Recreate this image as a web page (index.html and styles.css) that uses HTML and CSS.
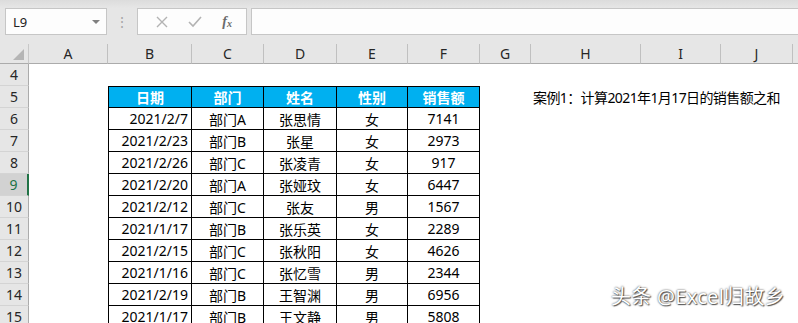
FILE: index.html
```html
<!DOCTYPE html>
<html lang="zh-CN">
<head>
    <meta charset="UTF-8">
    <title>SUMIF 案例</title>
    <link rel="stylesheet" href="styles.css">
</head>
<body>
    <div class="topstrip"></div>
    <div class="formula-bar">
        <div class="name-box">
            <span>L9</span>
            <span class="drop"></span>
        </div>
        <div class="grip">⋮</div>
        <div class="fx-box">
            <span class="ico">
                <svg width="12" height="12" viewBox="0 0 12 12"><path d="M1 1 L11 11 M11 1 L1 11" stroke="#b3b3b3" stroke-width="1.4" fill="none"/></svg>
            </span>
            <span class="ico">
                <svg width="14" height="12" viewBox="0 0 14 12"><path d="M1 6 L5 10 L13 1" stroke="#b3b3b3" stroke-width="1.6" fill="none"/></svg>
            </span>
            <span class="fx">f<sub>x</sub></span>
        </div>
        <div class="input"></div>
    </div>

    <div class="sheet" id="sheet">
        <div class="corner"><span class="tri"></span></div>
        <div class="ch">A</div>
        <div class="ch">B</div>
        <div class="ch">C</div>
        <div class="ch">D</div>
        <div class="ch">E</div>
        <div class="ch">F</div>
        <div class="ch">G</div>
        <div class="ch">H</div>
        <div class="ch">I</div>
        <div class="ch">J</div>
        <div class="ch last"></div>
    </div>

    <div class="watermark">头条 @Excel归故乡</div>

    <script>
        const head = ['日期', '部门', '姓名', '性别', '销售额'];
        const rows = [
            ['2021/2/7', '部门A', '张思情', '女', '7141'],
            ['2021/2/23', '部门B', '张星', '女', '2973'],
            ['2021/2/26', '部门C', '张凌青', '女', '917'],
            ['2021/2/20', '部门A', '张娅玟', '女', '6447'],
            ['2021/2/12', '部门C', '张友', '男', '1567'],
            ['2021/1/17', '部门B', '张乐英', '女', '2289'],
            ['2021/2/15', '部门C', '张秋阳', '女', '4626'],
            ['2021/1/16', '部门C', '张忆雪', '男', '2344'],
            ['2021/2/19', '部门B', '王智渊', '男', '6956'],
            ['2021/1/17', '部门B', '王文静', '男', '5808']
        ];
        const activeRow = 9;

        const sheet = document.getElementById('sheet');

        function cell(cls, text) {
            const d = document.createElement('div');
            d.className = cls;
            if (text) d.textContent = text;
            sheet.appendChild(d);
        }

        function addRow(num, values, isHead) {
            cell(num === activeRow ? 'rh active' : 'rh', String(num));
            cell('c');
            if (values) {
                values.forEach((v, i) => {
                    let cls = 'c t';
                    if (i === 0) cls += ' first';
                    if (isHead) cls += ' th';
                    else if (i === 0) cls += ' right';
                    cell(cls, v);
                });
            } else {
                for (let i = 0; i < 5; i++) cell('c');
            }
            cell('c');
            cell('c note', isHead ? '案例1：计算2021年1月17日的销售额之和' : '');
            cell('c');
            cell('c');
            cell('c');
        }

        addRow(4, null, false);
        addRow(5, head, true);
        rows.forEach((r, i) => addRow(i + 6, r, false));
    </script>
</body>
</html>
```

FILE: styles.css
```css
* {
    margin: 0;
    padding: 0;
    box-sizing: border-box;
}

body {
    width: 798px;
    height: 323px;
    overflow: hidden;
    background: #e6e6e6;
    font-family: "Noto Sans", "Noto Sans CJK SC", sans-serif;
    font-size: 14px;
    color: #000;
    position: relative;
}

.topstrip {
    height: 8px;
    background: linear-gradient(#dcdcdc, #e6e6e6);
}

.formula-bar {
    display: flex;
    align-items: stretch;
    height: 27px;
    padding-left: 5px;
}

.name-box {
    width: 102px;
    background: #fdfdfd;
    border: 1px solid #c6c6c6;
    display: flex;
    align-items: center;
    justify-content: space-between;
    padding: 0 6px 0 7px;
    font-size: 13px;
    color: #222;
}

.drop {
    width: 0;
    height: 0;
    border-left: 4px solid transparent;
    border-right: 4px solid transparent;
    border-top: 4px solid #808080;
}

.grip {
    width: 30px;
    display: flex;
    align-items: center;
    justify-content: center;
    color: #a6a6a6;
    font-size: 14px;
}

.fx-box {
    width: 110px;
    background: #fdfdfd;
    border: 1px solid #c6c6c6;
    display: flex;
    align-items: center;
    justify-content: space-around;
    padding: 0 4px 0 8px;
}

.ico {
    display: flex;
    align-items: center;
}

.fx {
    font-family: "Liberation Serif", serif;
    font-style: italic;
    font-weight: bold;
    font-size: 14px;
    color: #6b6b6b;
    line-height: 1;
}

.fx sub {
    font-size: 10px;
    vertical-align: -1px;
}

.input {
    flex: 1;
    margin-left: 4px;
    background: #fdfdfd;
    border-top: 1px solid #c6c6c6;
    border-bottom: 1px solid #c6c6c6;
    border-left: 1px solid #c6c6c6;
}

.sheet {
    margin-top: 9px;
    display: grid;
    grid-template-columns: 29px 79px 84px 72px 73px 71px 72px 51px 110px 80px 72px 1fr;
    grid-template-rows: 20px;
    grid-auto-rows: 22px;
    background: #fff;
}

.corner,
.ch {
    background: #e6e6e6;
    border-bottom: 1px solid #ababab;
}

.corner {
    position: relative;
    border-right: 1px solid #c8c8c8;
}

.tri {
    position: absolute;
    right: 4px;
    bottom: 3px;
    width: 0;
    height: 0;
    border-left: 11px solid transparent;
    border-bottom: 11px solid #b5b5b5;
}

.ch {
    border-right: 1px solid #c0c0c0;
    display: flex;
    align-items: flex-end;
    justify-content: center;
    font-size: 14px;
    line-height: 19px;
    color: #262626;
}

.ch.last {
    border-right: none;
}

.rh {
    background: #e6e6e6;
    border-right: 1px solid #ababab;
    border-bottom: 1px solid #d4d4d4;
    display: flex;
    align-items: center;
    justify-content: center;
    font-size: 14px;
    color: #262626;
}

.rh.active {
    background: #d2d2d2;
    border-right: 2px solid #217346;
    color: #217346;
}

.c {
    display: flex;
    align-items: center;
    justify-content: center;
    white-space: nowrap;
}

.t {
    border-right: 1px solid #000;
    border-bottom: 1px solid #000;
}

.t.first {
    border-left: 1px solid #000;
}

.th {
    background: #00b0f0;
    color: #fff;
    font-weight: bold;
    border-top: 1px solid #000;
}

.right {
    justify-content: flex-end;
    padding-right: 3px;
}

.note {
    justify-content: flex-start;
    padding-left: 2px;
    letter-spacing: -0.6px;
}

.watermark {
    position: absolute;
    right: 13px;
    bottom: 13px;
    color: #fff;
    font-size: 20px;
    letter-spacing: 0.3px;
    text-shadow: 0 0 2px rgba(0,0,0,0.8), 1px 1px 1px rgba(0,0,0,0.6);
}
```
